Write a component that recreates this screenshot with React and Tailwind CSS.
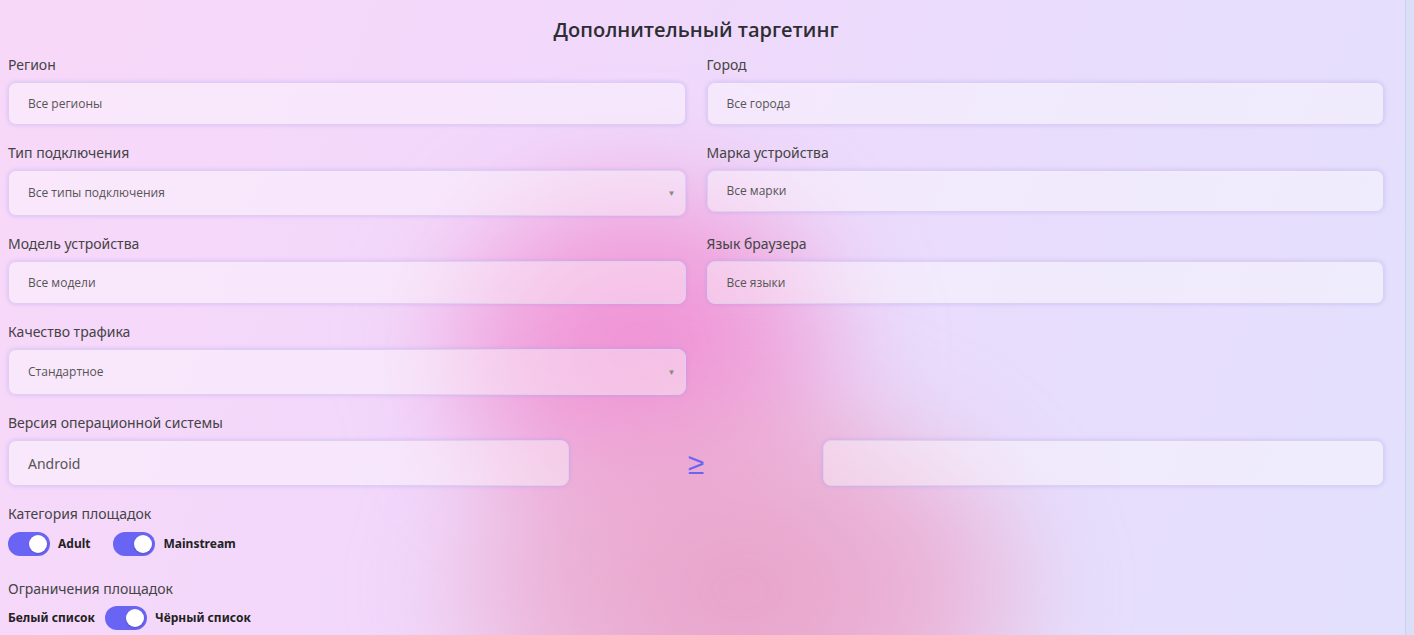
import React from "react";

const inputBase =
  "flex items-center rounded-lg border border-[#ddd0ee] bg-white/40 shadow-[0_0_4px_rgba(150,130,240,0.35)]";

function Label({ children }) {
  return <div className="mb-[7px] h-5 text-[14px] leading-5 text-[#444]">{children}</div>;
}

function TextInput({ value, h = "h-[43px]" }) {
  return (
    <div className={`${inputBase} ${h} px-[19px] font-['Open_Sans',sans-serif] text-[12px] text-[#555]`}>
      {value}
    </div>
  );
}

function Select({ value }) {
  return (
    <div className={`${inputBase} h-[46px] justify-between pl-[19px] pr-[9px] font-['Open_Sans',sans-serif] text-[12px] text-[#555]`}>
      <span>{value}</span>
      <span className="text-[8px] text-[#888]">▼</span>
    </div>
  );
}

function Toggle() {
  return (
    <div className="flex h-6 w-[42px] items-center justify-end rounded-full bg-[#6a64f4] px-[3px]">
      <div className="h-[18px] w-[18px] rounded-full bg-white shadow-[0_1px_2px_rgba(0,0,0,0.2)]" />
    </div>
  );
}

function Field({ label, children }) {
  return (
    <div>
      <Label>{label}</Label>
      {children}
    </div>
  );
}

export default function App() {
  return (
    <div className="flex min-h-[635px] w-full bg-[#dadff7] font-['Noto_Sans',sans-serif]">
      <div className="relative flex-1 overflow-hidden border-r border-[#c9d0f0] bg-[linear-gradient(110deg,#f8d8f9_0%,#f2d8fb_35%,#e9dcfc_65%,#e2e0fc_100%)]">
        {/* decorative pink blobs */}
        <div className="pointer-events-none absolute left-[400px] top-[140px] h-[420px] w-[480px] rounded-full bg-[radial-gradient(ellipse_at_center,rgba(240,140,210,1)_0%,rgba(240,150,212,0.75)_40%,transparent_72%)] blur-2xl" />
        <div className="pointer-events-none absolute left-[420px] top-[370px] h-[440px] w-[640px] rounded-full bg-[radial-gradient(ellipse_at_center,rgba(232,160,200,1)_0%,rgba(235,168,205,0.75)_45%,transparent_74%)] blur-2xl" />

        <div className="relative pl-2 pr-[21px] pt-4">
          <h2 className="h-7 text-center font-['Open_Sans',sans-serif] text-[20px] font-semibold leading-7 text-[#2d2d33]">
            Дополнительный таргетинг
          </h2>

          <div className="mt-[11px] flex flex-col gap-[18px]">
            <div className="grid grid-cols-2 gap-[21px]">
              <Field label="Регион">
                <TextInput value="Все регионы" />
              </Field>
              <Field label="Город">
                <TextInput value="Все города" />
              </Field>
            </div>

            <div className="grid grid-cols-2 items-start gap-[21px]">
              <Field label="Тип подключения">
                <Select value="Все типы подключения" />
              </Field>
              <Field label="Марка устройства">
                <TextInput value="Все марки" h="h-[42px]" />
              </Field>
            </div>

            <div className="grid grid-cols-2 gap-[21px]">
              <Field label="Модель устройства">
                <TextInput value="Все модели" />
              </Field>
              <Field label="Язык браузера">
                <TextInput value="Все языки" />
              </Field>
            </div>

            <div className="grid grid-cols-2 gap-[21px]">
              <Field label="Качество трафика">
                <Select value="Стандартное" />
              </Field>
              <div />
            </div>

            <div>
              <Label>Версия операционной системы</Label>
              <div className="grid grid-cols-[1fr_254px_1fr] items-center">
                <div className={`${inputBase} h-[46px] px-[19px] text-[14px] text-[#555]`}>Android</div>
                <div className="text-center text-[30px] leading-none text-[#6a64f4]">≥</div>
                <div className={`${inputBase} h-[46px]`} />
              </div>
            </div>

            <div>
              <div className="mb-2 h-5 text-[14px] leading-5 text-[#444]">Категория площадок</div>
              <div className="flex items-center text-[12px] font-bold text-[#222]">
                <Toggle />
                <span className="ml-2">Adult</span>
                <div className="ml-[23px]">
                  <Toggle />
                </div>
                <span className="ml-2">Mainstream</span>
              </div>
            </div>

            <div className="mt-[5px]">
              <div className="mb-[7px] h-5 text-[14px] leading-5 text-[#444]">Ограничения площадок</div>
              <div className="flex items-center gap-[8px] text-[12px] font-bold text-[#222]">
                <span className="w-[89px]">Белый список</span>
                <Toggle />
                <span>Чёрный список</span>
              </div>
            </div>
          </div>
        </div>
      </div>
      <div className="w-2" />
    </div>
  );
}
